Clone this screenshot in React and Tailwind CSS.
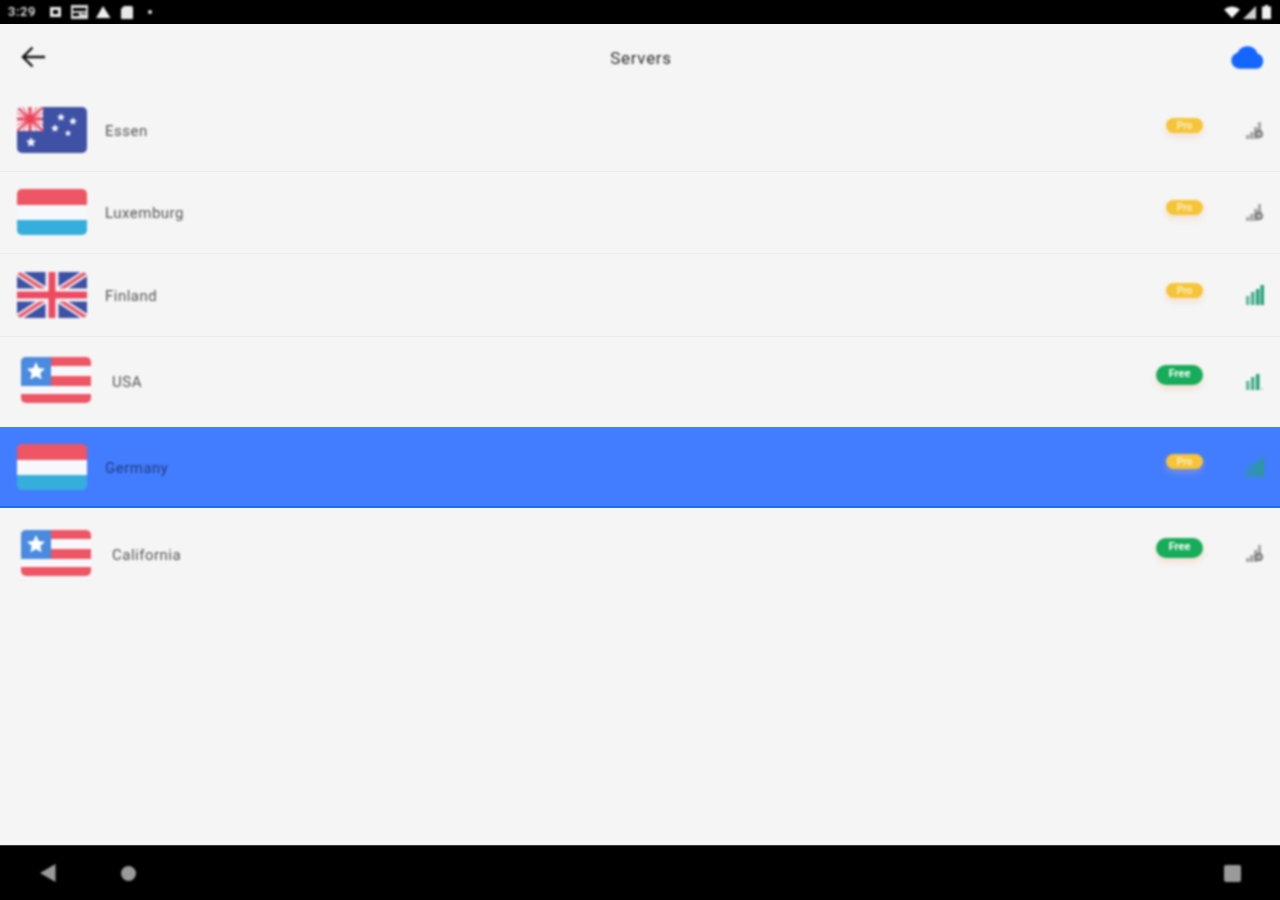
const servers = [
  { name: 'Essen', flag: 'au', plan: 'Pro', signal: 'none', row: 'h-[82px] pb-[1px] border-b border-[#ececec]' },
  { name: 'Luxemburg', flag: 'lu', plan: 'Pro', signal: 'none', row: 'h-[82px] pb-[1px] border-b border-[#ececec]' },
  { name: 'Finland', flag: 'uk', plan: 'Pro', signal: 'full', row: 'h-[83px] border-b border-[#ececec]' },
  { name: 'USA', flag: 'us', plan: 'Free', signal: 'three', row: 'h-[90px] pb-[5px]' },
  { name: 'Germany', flag: 'lu', plan: 'Pro', signal: 'full', row: 'h-[81px] bg-[#437dff] border-b-2 border-[#1f6bff]', selected: true },
  { name: 'California', flag: 'us', plan: 'Free', signal: 'none', row: 'h-[89px]' },
];

const star = 'M0-5l1.500 3.300 3.500.4-2.600 2.400.7 3.500L0 2.900l-3.100 1.700.7-3.500-2.600-2.400 3.500-.4z';

function Flag({ type }) {
  if (type === 'au') {
    return (
      <svg width="70" height="46" viewBox="0 0 70 46" className="shrink-0">
        <defs>
          <clipPath id="au-clip"><rect width="70" height="46" rx="5" /></clipPath>
        </defs>
        <g clipPath="url(#au-clip)">
          <rect width="70" height="46" fill="#3f51a5" />
          <rect width="26" height="24" fill="#eef0f7" />
          <path d="M0 0l26 24M26 0L0 24" stroke="#ee5565" strokeWidth="2.500" />
          <path d="M13 0v24M0 12h26" stroke="#ee5565" strokeWidth="3.500" />
          <path d="M6 0l7 12 7-12M0 6l13 6 13-6M0 18l13-6 13 6M6 24l7-12 7 12" stroke="#ee5565" strokeWidth="1" fill="none" />
          <circle cx="13" cy="12" r="4" fill="#ee3f58" />
        </g>
        <g fill="#f2f5fb">
          <path d={star} transform="translate(44 10) scale(0.8)" />
          <path d={star} transform="translate(56 14) scale(0.8)" />
          <path d={star} transform="translate(38 21) scale(0.8)" />
          <path d={star} transform="translate(51 26) scale(0.65)" />
          <path d={star} transform="translate(14 35) scale(1)" />
        </g>
      </svg>
    );
  }
  if (type === 'lu') {
    return (
      <svg width="70" height="46" viewBox="0 0 70 46" className="shrink-0">
        <defs>
          <clipPath id="lu-clip"><rect width="70" height="46" rx="5" /></clipPath>
        </defs>
        <g clipPath="url(#lu-clip)">
          <rect width="70" height="16" fill="#ee5565" />
          <rect y="16" width="70" height="15" fill="#f7f8fb" />
          <rect y="31" width="70" height="15" fill="#35aedb" />
        </g>
      </svg>
    );
  }
  if (type === 'uk') {
    return (
      <svg width="70" height="46" viewBox="0 0 70 46" className="shrink-0">
        <defs>
          <clipPath id="uk-clip"><rect width="70" height="46" rx="5" /></clipPath>
        </defs>
        <g clipPath="url(#uk-clip)">
          <rect width="70" height="46" fill="#3f51a5" />
          <path d="M0 0l70 46M70 0L0 46" stroke="#f4f5f8" strokeWidth="7" />
          <path d="M0 0l70 46M70 0L0 46" stroke="#ee5565" strokeWidth="3.500" />
          <path d="M35 0v46M0 23h70" stroke="#f4f5f8" strokeWidth="13" />
          <path d="M35 0v46M0 23h70" stroke="#ee4a60" strokeWidth="7" />
        </g>
      </svg>
    );
  }
  return (
    <svg width="70" height="46" viewBox="0 0 70 46" className="shrink-0">
      <defs>
        <clipPath id="us-clip"><rect width="70" height="46" rx="5" /></clipPath>
      </defs>
      <g clipPath="url(#us-clip)">
        <rect width="70" height="46" fill="#f7f8fb" />
        <rect width="70" height="9" fill="#ee5565" />
        <rect y="19" width="70" height="10" fill="#ee5565" />
        <rect y="37" width="70" height="9" fill="#ee5565" />
        <rect width="30" height="29" fill="#4a8be0" />
        <path d={star} transform="translate(15 14) scale(1.800)" fill="#ffffff" />
      </g>
    </svg>
  );
}

function Signal({ level, dim }) {
  const green = dim ? '#2a9d8f' : '#26a17b';
  if (level === 'none') {
    return (
      <svg width="18" height="20" viewBox="0 0 18 20" className="shrink-0">
        <path d="M0 15h3.500v4H0zM4 12h3.500v7H4zM8 7h3.500v12H8zM12 2h3v9h-3z" fill="#a8a8a8" />
        <circle cx="13" cy="14" r="3" fill="#f0f0f0" stroke="#6e6e6e" strokeWidth="1.800" />
        <circle cx="13" cy="14" r="1" fill="#6e6e6e" />
      </svg>
    );
  }
  return (
    <svg width="18" height="20" viewBox="0 0 18 20" className="shrink-0">
      <rect x="0" y="11" width="3.500" height="9" fill={green} opacity="0.7" />
      <rect x="5" y="7" width="3.500" height="13" fill={green} opacity="0.85" />
      <rect x="10" y="4" width="3.500" height="16" fill={green} />
      {level === 'full' ? <rect x="14.500" y="0" width="3.500" height="20" fill={green} /> : <rect x="15" y="18" width="2" height="2" fill="#c5c5c5" />}
    </svg>
  );
}

function ServerRow({ server }) {
  const isFree = server.plan === 'Free';
  return (
    <div className={`${server.row} flex items-center pr-4 [&>*]:blur-[0.8px] ${isFree ? 'pl-[21px]' : 'pl-[17px]'}`}>
      <Flag type={server.flag} />
      <span
        className={`${isFree ? 'ml-[21px] mt-[6px]' : 'ml-[18px] mt-[2px]'} text-[15px] tracking-[0.5px] ${
          server.selected ? 'text-[#223a7d] mt-[4px]' : 'text-[#555555]'
        }`}
      >
        {server.name}
      </span>
      <div className="flex-1" />
      {isFree ? (
        <span className="mb-[10px] mr-[43px] w-[47px] h-[20px] rounded-full bg-[#17ac5a] text-white text-[11px] font-bold flex items-center justify-center shadow-[0_4px_6px_rgba(240,180,140,0.35)]">
          Free
        </span>
      ) : (
        <span className="mb-[10px] mr-[43px] w-[37px] h-[15px] rounded-full bg-[#f6c436] text-[#fbeebf] text-[10px] font-bold flex items-center justify-center shadow-[0_4px_6px_rgba(240,180,140,0.3)]">
          Pro
        </span>
      )}
      <Signal level={server.signal} dim={server.selected} />
    </div>
  );
}

export default function App() {
  return (
    <div className="w-[1280px] h-[900px] flex flex-col bg-[#f5f5f5] font-['Roboto',sans-serif] overflow-hidden">
      <div className="h-[24px] bg-black flex items-center justify-between pl-2 pr-[7px] shrink-0 [&>*]:blur-[0.8px]">
        <div className="flex items-center">
          <span className="text-[#e8e8e8] text-[13px] font-medium tracking-[0.6px] w-[42px]">3:29</span>
          <svg width="110" height="14" viewBox="0 0 110 14">
            <path fillRule="evenodd" d="M0 2h11v10H0zM3 5v4h5V5z" fill="#e8e8e8" />
            <path fillRule="evenodd" d="M21 0h17v14H21zM23 3v3h13V3zM23 8v3h6V8zM31 8v1h5V8z" fill="#d8d8d8" />
            <path d="M53 1l7.500 12H46z" fill="#eeeeee" />
            <path d="M74 1h7a2 2 0 0 1 2 2v10a1 1 0 0 1-1 1H72a1 1 0 0 1-1-1V4z" fill="#e8e8e8" />
            <circle cx="100" cy="7" r="2" fill="#e8e8e8" />
          </svg>
        </div>
        <div className="flex items-center gap-[3px]">
          <svg width="16" height="12" viewBox="0 0 16 12"><path d="M0 3.500Q8-2.500 16 3.500L8 12z" fill="#f4f4f4" /></svg>
          <svg width="13" height="13" viewBox="0 0 13 13"><path d="M13 0v13H0z" fill="#d0d0d0" /></svg>
          <svg width="12" height="14" viewBox="0 0 12 14" className="ml-[2px]"><path d="M4 0h3v1.500h3V14H1V1.500h3z" fill="#f0f0f0" /></svg>
        </div>
      </div>

      <div className="h-[66px] shrink-0 flex items-center justify-between pl-[21px] pr-[15px] [&>*]:blur-[0.8px]">
        <svg width="25" height="22" viewBox="0 0 25 22" fill="none" stroke="#111111" strokeWidth="2.400">
          <path d="M24 11H2M11.500 1.500L2 11l9.500 9.500" />
        </svg>
        <span className="text-[17px] text-[#2e2e2e] tracking-[0.7px] ml-[6px] mt-[4px]">Servers</span>
        <svg width="35" height="25" viewBox="0 0 34 24" className="mt-[1px]">
          <path d="M9 23a8 8 0 0 1-1.500-15.800C9 3 13 1 17 1c5 0 8.500 3 10 7.300A7.600 7.600 0 0 1 26 23z" fill="#1565ff" />
        </svg>
      </div>

      <div className="flex-1">
        {servers.map((server) => (
          <ServerRow key={server.name} server={server} />
        ))}
      </div>

      <div className="h-[55px] bg-black shrink-0 flex items-center justify-between pl-[40px] pr-[39px] border-t border-[#3a3a3a] [&>*]:blur-[0.8px]">
        <div className="flex items-center gap-[65px]">
          <svg width="16" height="18" viewBox="0 0 16 18"><path d="M15.500 0v18L0 9z" fill="#9a9a9a" /></svg>
          <div className="w-[15px] h-[15px] rounded-full bg-[#9a9a9a]" />
        </div>
        <div className="w-[17px] h-[17px] rounded-[2px] bg-[#9a9a9a]" />
      </div>
    </div>
  );
}
